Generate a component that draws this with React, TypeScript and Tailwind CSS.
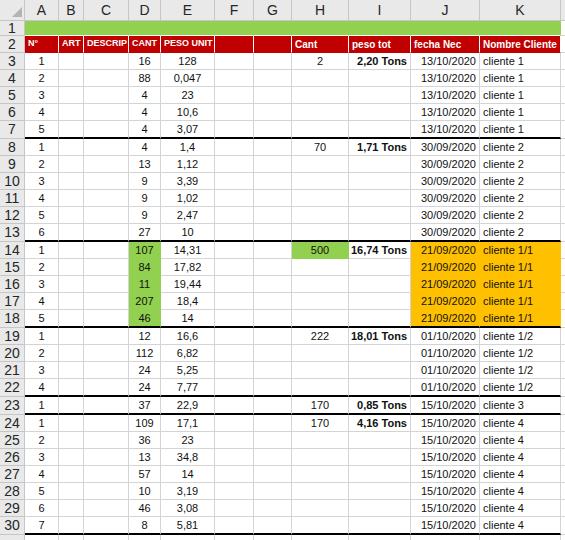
import React from 'react';

type Fill = 'none' | 'green' | 'orange' | 'red' | 'lime';

type Row = {
  n: number;
  a?: string;
  d?: string;
  e?: string;
  h?: string;
  i?: string;
  j?: string;
  k?: string;
  thick?: boolean;
  dGreen?: boolean;
  hGreen?: boolean;
  orange?: boolean;
};

// column widths, A..K then a sliver of L
const COLS = [
  { key: 'A', w: 'w-[34px]' },
  { key: 'B', w: 'w-[25px]' },
  { key: 'C', w: 'w-[45px]' },
  { key: 'D', w: 'w-[32px]' },
  { key: 'E', w: 'w-[54px]' },
  { key: 'F', w: 'w-[39px]' },
  { key: 'G', w: 'w-[38px]' },
  { key: 'H', w: 'w-[57px]' },
  { key: 'I', w: 'w-[62px]' },
  { key: 'J', w: 'w-[69px]' },
  { key: 'K', w: 'w-[81px]' },
];

// narrow columns get the smaller label so it fits like Calibri does
const HEADERS = [
  { t: 'N°', s: 'text-[9px]' },
  { t: 'ART', s: 'text-[9px]' },
  { t: 'DESCRIP', s: 'text-[9px]' },
  { t: 'CANT', s: 'text-[9px]' },
  { t: 'PESO UNIT', s: 'text-[9px]' },
  { t: '', s: '' },
  { t: '', s: '' },
  { t: 'Cant', s: 'text-[10px]' },
  { t: 'peso tot', s: 'text-[10px]' },
  { t: 'fecha Nec', s: 'text-[10px]' },
  { t: 'Nombre Cliente', s: 'text-[10px]' },
];

const rows: Row[] = [
  { n: 3, a: '1', d: '16', e: '128', h: '2', i: '2,20 Tons', j: '13/10/2020', k: 'cliente 1' },
  { n: 4, a: '2', d: '88', e: '0,047', j: '13/10/2020', k: 'cliente 1' },
  { n: 5, a: '3', d: '4', e: '23', j: '13/10/2020', k: 'cliente 1' },
  { n: 6, a: '4', d: '4', e: '10,6', j: '13/10/2020', k: 'cliente 1' },
  { n: 7, a: '5', d: '4', e: '3,07', j: '13/10/2020', k: 'cliente 1', thick: true },
  { n: 8, a: '1', d: '4', e: '1,4', h: '70', i: '1,71 Tons', j: '30/09/2020', k: 'cliente 2' },
  { n: 9, a: '2', d: '13', e: '1,12', j: '30/09/2020', k: 'cliente 2' },
  { n: 10, a: '3', d: '9', e: '3,39', j: '30/09/2020', k: 'cliente 2' },
  { n: 11, a: '4', d: '9', e: '1,02', j: '30/09/2020', k: 'cliente 2' },
  { n: 12, a: '5', d: '9', e: '2,47', j: '30/09/2020', k: 'cliente 2' },
  { n: 13, a: '6', d: '27', e: '10', j: '30/09/2020', k: 'cliente 2', thick: true },
  { n: 14, a: '1', d: '107', e: '14,31', h: '500', i: '16,74 Tons', j: '21/09/2020', k: 'cliente 1/1', dGreen: true, hGreen: true, orange: true },
  { n: 15, a: '2', d: '84', e: '17,82', j: '21/09/2020', k: 'cliente 1/1', dGreen: true, orange: true },
  { n: 16, a: '3', d: '11', e: '19,44', j: '21/09/2020', k: 'cliente 1/1', dGreen: true, orange: true },
  { n: 17, a: '4', d: '207', e: '18,4', j: '21/09/2020', k: 'cliente 1/1', dGreen: true, orange: true },
  { n: 18, a: '5', d: '46', e: '14', j: '21/09/2020', k: 'cliente 1/1', dGreen: true, orange: true, thick: true },
  { n: 19, a: '1', d: '12', e: '16,6', h: '222', i: '18,01 Tons', j: '01/10/2020', k: 'cliente 1/2' },
  { n: 20, a: '2', d: '112', e: '6,82', j: '01/10/2020', k: 'cliente 1/2' },
  { n: 21, a: '3', d: '24', e: '5,25', j: '01/10/2020', k: 'cliente 1/2' },
  { n: 22, a: '4', d: '24', e: '7,77', j: '01/10/2020', k: 'cliente 1/2', thick: true },
  { n: 23, a: '1', d: '37', e: '22,9', h: '170', i: '0,85 Tons', j: '15/10/2020', k: 'cliente 3', thick: true },
  { n: 24, a: '1', d: '109', e: '17,1', h: '170', i: '4,16 Tons', j: '15/10/2020', k: 'cliente 4' },
  { n: 25, a: '2', d: '36', e: '23', j: '15/10/2020', k: 'cliente 4' },
  { n: 26, a: '3', d: '13', e: '34,8', j: '15/10/2020', k: 'cliente 4' },
  { n: 27, a: '4', d: '57', e: '14', j: '15/10/2020', k: 'cliente 4' },
  { n: 28, a: '5', d: '10', e: '3,19', j: '15/10/2020', k: 'cliente 4' },
  { n: 29, a: '6', d: '46', e: '3,08', j: '15/10/2020', k: 'cliente 4' },
  { n: 30, a: '7', d: '8', e: '5,81', j: '15/10/2020', k: 'cliente 4', thick: true },
];

const bgCls: Record<Fill, string> = {
  none: 'bg-white',
  green: 'bg-[#92d050]',
  lime: 'bg-[#92d050]',
  orange: 'bg-[#ffc000]',
  red: 'bg-[#c00000]',
};

const rightCls: Record<Fill, string> = {
  none: 'border-r-[#d4d4d4]',
  green: 'border-r-[#92d050]',
  lime: 'border-r-[#92d050]',
  orange: 'border-r-[#ffc000]',
  red: 'border-r-white',
};

const bottomCls: Record<Fill, string> = {
  none: 'border-b border-b-[#d4d4d4]',
  green: 'border-b border-b-[#92d050]',
  lime: 'border-b border-b-white',
  orange: 'border-b border-b-[#ffc000]',
  red: 'border-b border-b-[#c00000]',
};

const alignCls = {
  left: 'justify-start pl-[3px]',
  center: 'justify-center',
  right: 'justify-end pr-[3px]',
};

function Cell({
  w,
  fill = 'none',
  thick,
  align = 'center',
  bold,
  extra = '',
  children,
}: {
  w: string;
  fill?: Fill;
  thick?: boolean;
  align?: 'left' | 'center' | 'right';
  bold?: boolean;
  extra?: string;
  children?: React.ReactNode;
}) {
  return (
    <div
      className={[
        'flex h-full shrink-0 items-center whitespace-nowrap border-r',
        w,
        bgCls[fill],
        rightCls[fill],
        thick ? 'border-b-2 border-b-black' : bottomCls[fill],
        alignCls[align],
        bold ? 'font-bold' : '',
        extra,
      ].join(' ')}
    >
      {children}
    </div>
  );
}

function RowHead({ n }: { n: number | string }) {
  return (
    <div className="flex h-full w-[25px] shrink-0 items-center justify-center border-r border-b border-[#c6c6c6] bg-[#e9e9e9] text-[14px] text-[#262626]">
      {n}
    </div>
  );
}

function Rest({ head }: { head?: boolean }) {
  return head ? (
    <div className="h-full flex-1 border-b border-[#c6c6c6] bg-[#e9e9e9]" />
  ) : (
    <div className="h-full flex-1 border-b border-b-[#d4d4d4] bg-white" />
  );
}

export default function App() {
  return (
    <div className="h-[540px] w-[565px] overflow-hidden bg-white font-['Liberation_Sans',Arial,sans-serif] text-[11px] text-[#111]">
      {/* column letters */}
      <div className="flex h-[21px]">
        <div className="relative h-full w-[25px] shrink-0 border-r border-b border-[#c6c6c6] bg-[#e9e9e9]">
          <svg className="absolute left-[12px] top-[7px]" width="10" height="10" viewBox="0 0 10 10">
            <polygon points="0,10 10,10 10,0" fill="#b4b4b4" />
          </svg>
        </div>
        {COLS.map((c) => (
          <div
            key={c.key}
            className={`flex h-full shrink-0 items-center justify-center border-r border-b border-[#c6c6c6] bg-[#e9e9e9] text-[14px] text-[#262626] ${c.w}`}
          >
            {c.key}
          </div>
        ))}
        <Rest head />
      </div>

      {/* row 1: green band */}
      <div className="flex h-[15px]">
        <RowHead n={1} />
        {COLS.map((c) => (
          <Cell key={c.key} w={c.w} fill="lime" />
        ))}
        <Rest />
      </div>

      {/* row 2: headers */}
      <div className="flex h-[17px] text-white">
        <RowHead n={2} />
        {COLS.map((c, idx) => (
          <Cell key={c.key} w={c.w} fill="red" align="left" bold extra={HEADERS[idx].s}>
            {HEADERS[idx].t}
          </Cell>
        ))}
        <Rest />
      </div>

      {rows.map((r) => {
        const thick = r.thick;
        return (
          <div key={r.n} className={`flex ${thick ? 'h-[18px]' : 'h-[17px]'}`}>
            <RowHead n={r.n} />
            <Cell w={COLS[0].w} thick={thick}>{r.a}</Cell>
            <Cell w={COLS[1].w} thick={thick} />
            <Cell w={COLS[2].w} thick={thick} />
            <Cell w={COLS[3].w} thick={thick} fill={r.dGreen ? 'green' : 'none'}>
              {r.d}
            </Cell>
            <Cell w={COLS[4].w} thick={thick}>{r.e}</Cell>
            <Cell w={COLS[5].w} thick={thick} />
            <Cell w={COLS[6].w} thick={thick} />
            <Cell w={COLS[7].w} thick={thick} fill={r.hGreen ? 'green' : 'none'}>
              {r.h}
            </Cell>
            <Cell w={COLS[8].w} thick={thick} align="right" bold>
              {r.i}
            </Cell>
            <Cell w={COLS[9].w} thick={thick} align="right" fill={r.orange ? 'orange' : 'none'}>
              {r.j}
            </Cell>
            <Cell w={COLS[10].w} thick={thick} align="left" fill={r.orange ? 'orange' : 'none'}>
              {r.k}
            </Cell>
            <Rest />
          </div>
        );
      })}

      {/* row 31, only its top edge shows */}
      <div className="flex h-[17px]">
        <div className="h-full w-[25px] shrink-0 border-r border-[#c6c6c6] bg-[#e9e9e9]" />
        {COLS.map((c) => (
          <Cell key={c.key} w={c.w} />
        ))}
        <Rest />
      </div>
    </div>
  );
}
